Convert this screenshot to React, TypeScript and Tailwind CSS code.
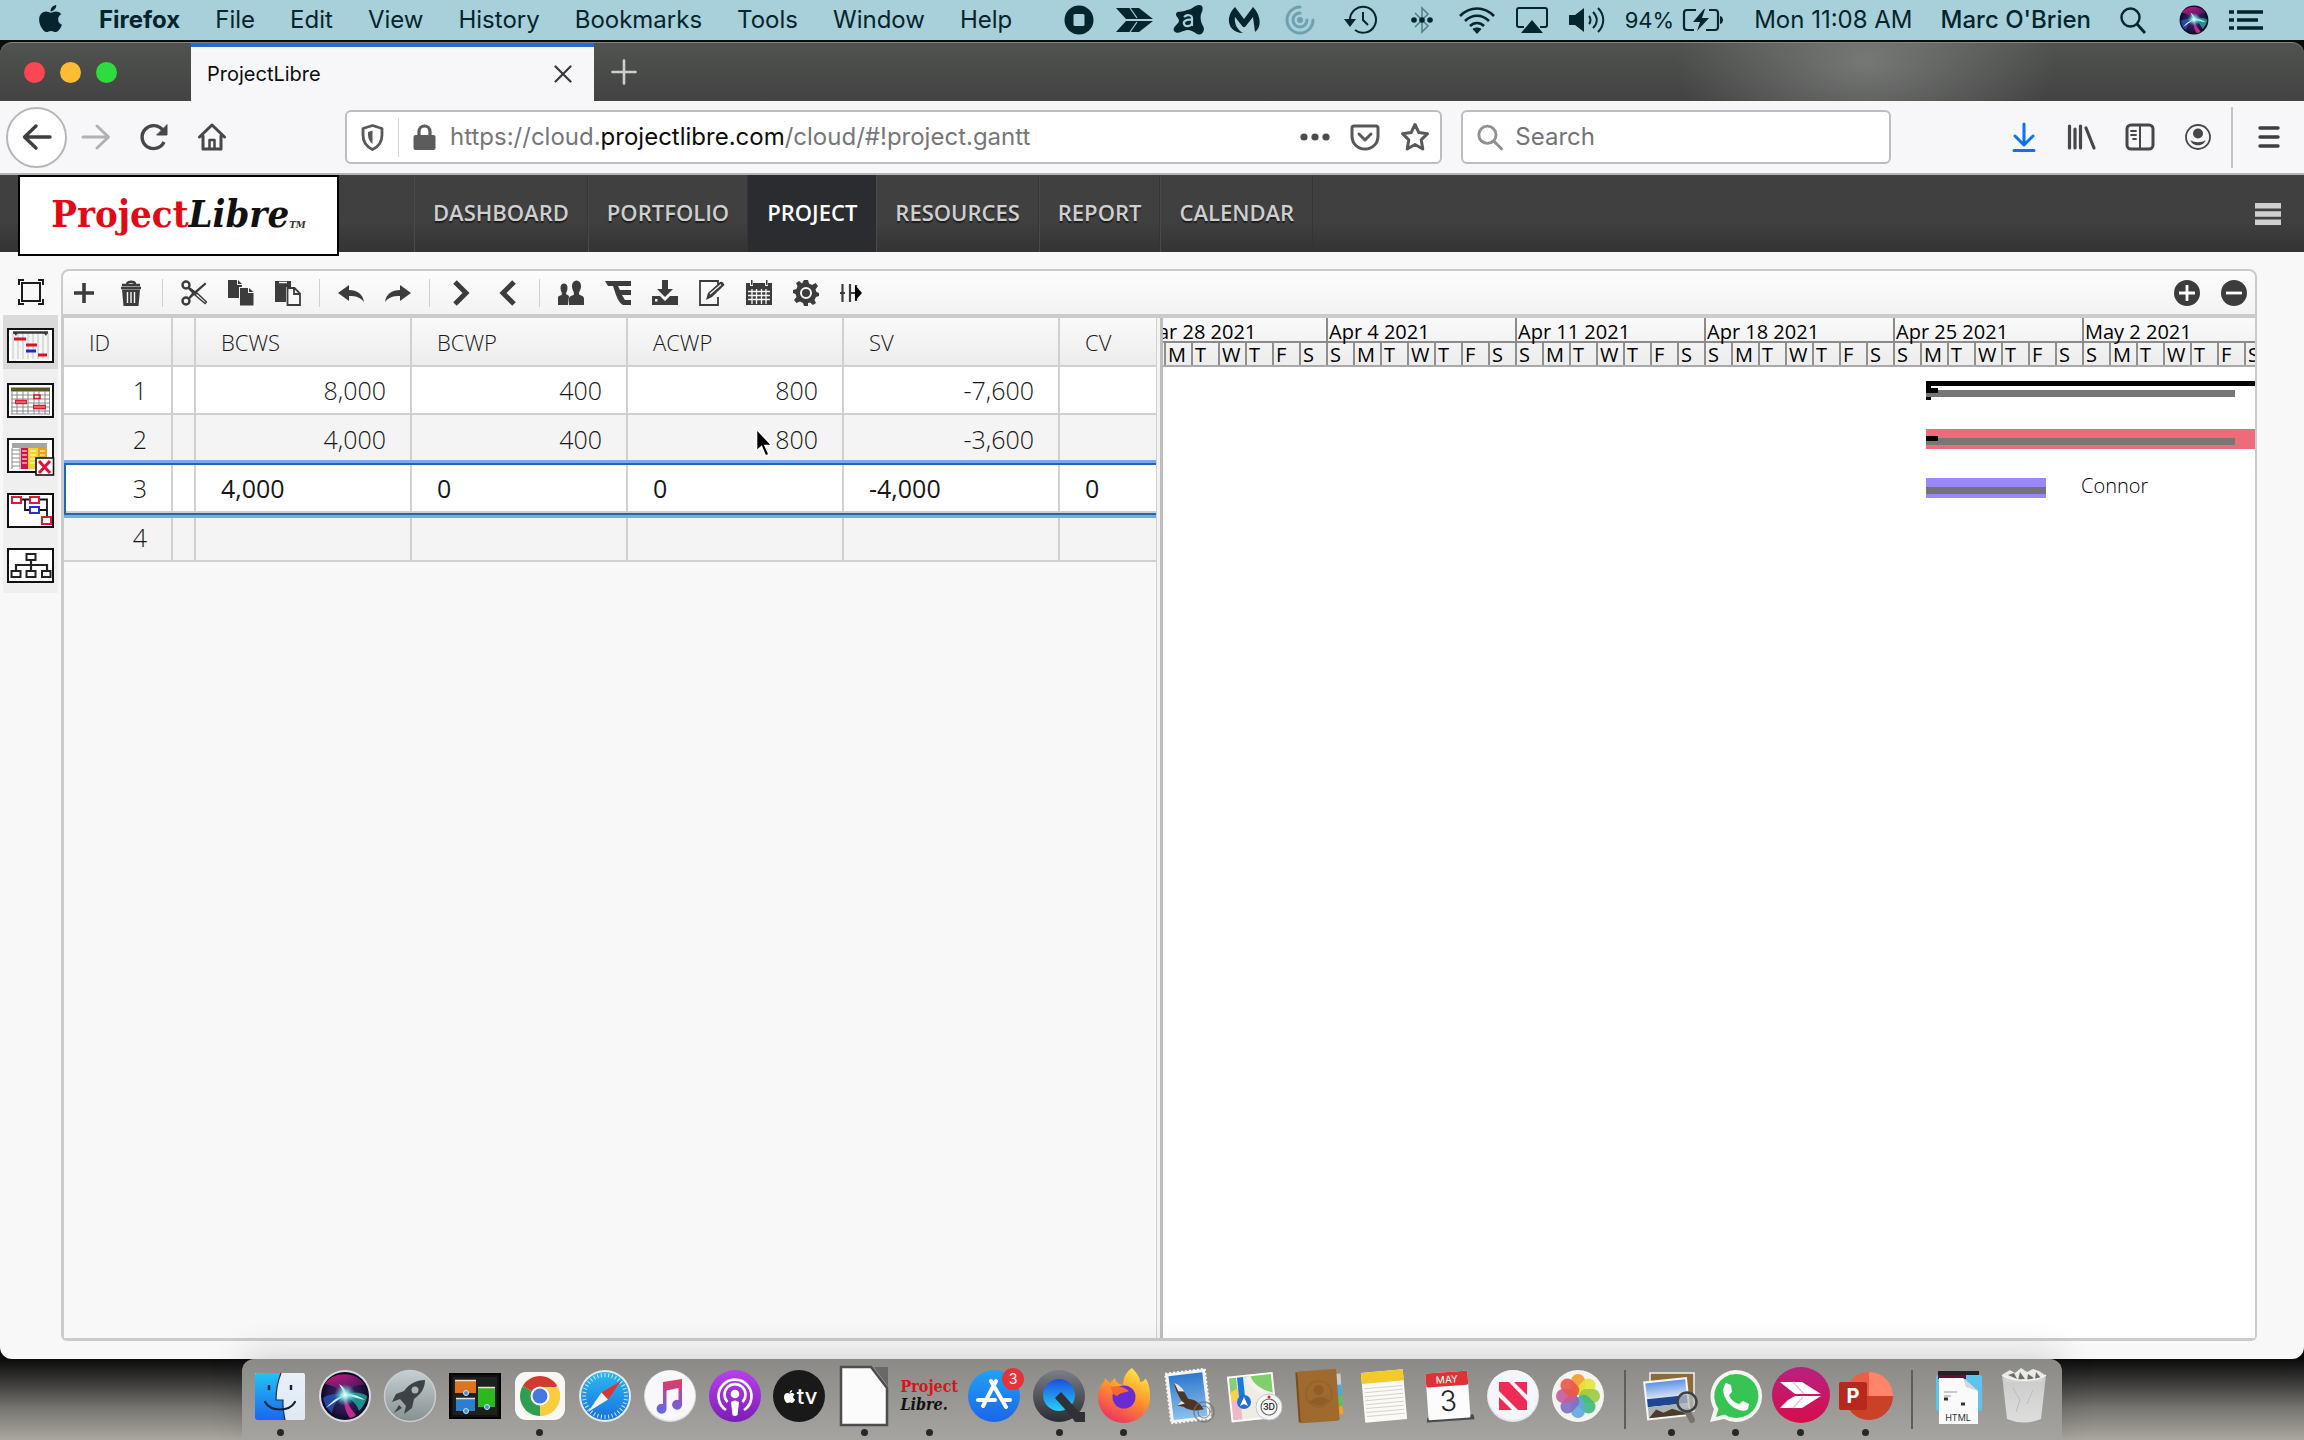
import React from "react";
import { FaApple } from "react-icons/fa";

type Kids = { children?: React.ReactNode };

/* ---------- Menu bar ---------- */

const menus = ["File", "Edit", "View", "History", "Bookmarks", "Tools", "Window", "Help"];

function Glyph({ w = 32, h = 30, label, children }: Kids & { w?: number; h?: number; label?: string }) {
  return (
    <svg width={w} height={h} viewBox={`0 0 ${w} ${h}`} fill="none" role="img" aria-label={label}>
      {children}
    </svg>
  );
}

function SiriArt({ id }: { id: string }) {
  return (
    <>
      <defs>
        <radialGradient id={`${id}a`} cx="0.5" cy="0.5" r="0.5">
          <stop offset="0" stopColor="#3a2a68" />
          <stop offset="0.7" stopColor="#241648" />
          <stop offset="1" stopColor="#0b0a1e" />
        </radialGradient>
        <radialGradient id={`${id}b`} cx="0.5" cy="0.5" r="0.5">
          <stop offset="0" stopColor="#ffffff" />
          <stop offset="0.3" stopColor="#9ff3f0" stopOpacity="0.9" />
          <stop offset="1" stopColor="#2dd8d0" stopOpacity="0" />
        </radialGradient>
        <linearGradient id={`${id}c`} x1="0" y1="0" x2="0.6" y2="1">
          <stop offset="0" stopColor="#e01a86" stopOpacity="0.95" />
          <stop offset="1" stopColor="#8a1a8a" stopOpacity="0.3" />
        </linearGradient>
      </defs>
      <circle cx="26" cy="26" r="24" fill={`url(#${id}a)`} />
      <path d="M6 14C14 1 38 1 46 15C38 14 31 18 26 25C19 18 12 15 6 14Z" fill={`url(#${id}c)`} />
      <path d="M26 25C33 21 42 22 48 26C47 33 43 38 40 41C38 34 32 29 26 25Z" fill="#1fb8a8" opacity="0.75" />
      <path d="M26 25C18 23 9 24 4 28C6 36 9 40 13 43C14 35 19 29 26 25Z" fill="#2a62d8" opacity="0.65" />
      <path d="M26 25C24 32 26 42 31 48C35 47 36 46 37 45C31 38 28 32 26 25Z" fill="#e42aa0" opacity="0.85" />
      <path d="M26 25L7 38C14 30 19 27 26 25Z M26 25L46 30C38 25 33 23 26 25Z M26 25L20 14C25 17 27 20 26 25Z" fill="#d6fffb" />
      <circle cx="26" cy="25" r="11" fill={`url(#${id}b)`} />
    </>
  );
}

function StatusCell({ wide = false, children }: Kids & { wide?: boolean }) {
  return <span className={`flex justify-center ${wide ? "w-[68px]" : "w-[55px]"}`}>{children}</span>;
}

function MenuBar() {
  const c = "#04252d";
  return (
    <header className="flex h-10 items-center bg-[#a7d0da] pl-9 pr-[41px] text-[24px] leading-none text-[#04252d]">
      <FaApple className="-mt-1 h-[31px] w-[29px]" aria-label="Apple menu" />
      <nav className="ml-[34px] flex items-center gap-[35px]">
        <span className="font-bold">Firefox</span>
        {menus.map((m) => (
          <span key={m}>{m}</span>
        ))}
      </nav>
      <div className="ml-auto flex items-center">
        <StatusCell>
          <Glyph label="Recording">
            <circle cx="16" cy="15" r="14.5" fill={c} />
            <rect x="10.5" y="9" width="11" height="12" rx="1.5" fill="#a7d0da" />
          </Glyph>
        </StatusCell>
        <StatusCell>
          <Glyph w={38} label="Skitch">
            <path d="M1 3H24L38 14H11Z M11 16H38L24 27H1Z" fill={c} />
            <path d="M15 3L22 13M15 27L22 17" stroke="#a7d0da" strokeWidth="1.2" />
          </Glyph>
        </StatusCell>
        <StatusCell>
          <Glyph label="Avast">
            <path
              d="M14 5C18 5 22 0 26 0C31 0 30 5 28 9C27 14 28 17 30 21C33 26 28 31 24 29C21 27 18 25 14 25C9 26 4 30 1 26C-1 22 5 20 6 16C6 13 3 12 3 9C4 5 9 8 14 5Z"
              fill={c}
            />
            <path d="M11 12C14 9 19 10 19 13V21M19 15C14 14 10 16 11 19C12 22 18 22 19 18" stroke="#a7d0da" strokeWidth="2.2" />
          </Glyph>
        </StatusCell>
        <StatusCell>
          <Glyph label="Malwarebytes">
            <path d="M7 2L16 14L25 2C33 10 34 22 27 27L25 12L17 22H15L7 12C6 18 9 25 15 28C4 28 0 20 1 13C2 8 4 5 7 2Z" fill={c} />
          </Glyph>
        </StatusCell>
        <StatusCell>
          <Glyph label="Sync idle">
            <g stroke="#6fa0ad" strokeWidth="3" strokeLinecap="round">
              <path d="M17 2A13 13 0 1 0 30 15" />
              <path d="M17 8A7 7 0 1 0 24 15" />
            </g>
            <circle cx="17" cy="15" r="3" fill="#6fa0ad" />
          </Glyph>
        </StatusCell>
        <StatusCell wide>
          <Glyph w={34} label="Time Machine">
            <path d="M6 15A13 13 0 1 1 11 25" stroke={c} strokeWidth="2" />
            <path d="M0 14H12L6 22Z" fill={c} />
            <path d="M19 7V15L24 20" stroke={c} strokeWidth="2" />
          </Glyph>
        </StatusCell>
        <StatusCell>
          <Glyph w={22} label="Bluetooth">
            <path d="M4 8L17 21L11 27V3L17 9L4 22" stroke="#4d7d89" strokeWidth="1.5" />
            <circle cx="3" cy="15" r="2.8" fill={c} />
            <circle cx="11" cy="15" r="2.8" fill={c} />
            <circle cx="19" cy="15" r="2.8" fill={c} />
          </Glyph>
        </StatusCell>
        <StatusCell>
          <Glyph w={38} label="Wi-Fi">
            <path d="M2 11C12 1 26 1 36 11M7 16C14 9 24 9 31 16M12 21C16 17 22 17 26 21" stroke={c} strokeWidth="2.6" />
            <path d="M14.5 24C17 22 21 22 23.5 24L19 29Z" fill={c} />
          </Glyph>
        </StatusCell>
        <StatusCell>
          <Glyph w={34} label="AirPlay">
            <path d="M9 22H4A2 2 0 0 1 2 20V5A2 2 0 0 1 4 3H30A2 2 0 0 1 32 5V20A2 2 0 0 1 30 22H25" stroke={c} strokeWidth="2" />
            <path d="M17 15L28 28H6Z" fill={c} />
          </Glyph>
        </StatusCell>
        <StatusCell>
          <Glyph w={38} label="Volume">
            <path d="M1 10H7L16 3V27L7 20H1Z" fill={c} />
            <path d="M21 11C23 13 23 17 21 19M25 7C30 12 30 18 25 23M30 3C37 10 37 20 30 27" stroke={c} strokeWidth="2" />
          </Glyph>
        </StatusCell>
        <span className="ml-[10px] text-[22px]">94%</span>
        <span className="ml-2">
          <Glyph w={42} h={24} label="Battery charging">
            <path d="M14 2H5A3 3 0 0 0 2 5V19A3 3 0 0 0 5 22H12M27 2H33A3 3 0 0 1 36 5V19A3 3 0 0 1 33 22H24" stroke={c} strokeWidth="2.2" />
            <path d="M22 1L11 14H18L15 23L27 10H20L23 1Z" fill={c} />
            <path d="M38 8C42 9 42 15 38 16Z" fill={c} />
          </Glyph>
        </span>
        <span className="ml-[30px]">Mon 11:08 AM</span>
        <span className="ml-7 font-medium">Marc O'Brien</span>
        <span className="ml-7">
          <Glyph w={28} h={28} label="Spotlight">
            <circle cx="11.5" cy="11.5" r="9" stroke={c} strokeWidth="2.4" />
            <path d="M18 18L26 27" stroke={c} strokeWidth="2.8" />
          </Glyph>
        </span>
        <svg className="ml-8" width="30" height="30" viewBox="1 1 50 50" role="img" aria-label="Siri">
          <SiriArt id="ms" />
        </svg>
        <span className="ml-5">
          <Glyph w={34} h={20} label="Notification Center">
            <path d="M0 2H5M0 10H5M0 18H5M8 2H34M8 10H29M8 18H34" stroke={c} strokeWidth="3.4" />
          </Glyph>
        </span>
      </div>
    </header>
  );
}

/* ---------- Browser chrome ---------- */

function TabStrip() {
  return (
    <div
      className="flex h-[59px] rounded-t-xl border-t border-[#7d8585]"
      style={{
        backgroundImage:
          "radial-gradient(ellipse 190px 110px at 81% 20px, rgba(160,162,160,0.5), transparent), linear-gradient(#505350, #424342)",
      }}
    >
      <div className="flex w-[191px] items-center gap-[15px] pl-6">
        <span className="size-[21px] rounded-full bg-[#fc4652]" />
        <span className="size-[21px] rounded-full bg-[#fdbc31]" />
        <span className="size-[21px] rounded-full bg-[#2fdc3e]" />
      </div>
      <div className="flex w-[403px] items-center border-t-4 border-[#2b68d6] bg-[#f7f7fa] pl-4 pr-[22px]">
        <span className="text-[20px] text-[#0c0c0d]">ProjectLibre</span>
        <button className="ml-auto" aria-label="Close tab">
          <svg width="18" height="18" viewBox="0 0 18 18" stroke="#38383a" strokeWidth="2.2" strokeLinecap="round">
            <path d="M1.5 1.5L16.5 16.5M16.5 1.5L1.5 16.5" />
          </svg>
        </button>
      </div>
      <button className="px-[17px]" aria-label="New tab">
        <svg width="26" height="26" viewBox="0 0 26 26" stroke="#cfcfcf" strokeWidth="2.6" strokeLinecap="round">
          <path d="M13 1.5V24.5M1.5 13H24.5" />
        </svg>
      </button>
    </div>
  );
}

function ToolbarIcon({ label, color = "#47474a", children }: Kids & { label: string; color?: string }) {
  return (
    <button className="flex w-[58px] justify-center" aria-label={label}>
      <svg width="30" height="30" viewBox="0 0 30 30" fill="none" stroke={color} strokeWidth="3" strokeLinecap="round" strokeLinejoin="round">
        {children}
      </svg>
    </button>
  );
}

function AddressBar() {
  return (
    <div className="flex h-[74px] items-center border-b-2 border-[#b4b4b6] bg-[#f7f7fa]">
      <div className="flex w-[345px] items-center pl-[6px]">
        <button className="flex size-[61px] items-center justify-center rounded-full border-2 border-[#b6b6b9] bg-white" aria-label="Back">
          <svg width="30" height="30" viewBox="0 0 30 30" fill="none" stroke="#3e3e41" strokeWidth="3.4" strokeLinecap="round" strokeLinejoin="round">
            <path d="M28 15H3M14 4L2.5 15L14 26" />
          </svg>
        </button>
        <ToolbarIcon label="Forward" color="#b2b2b5">
          <path d="M2 15H27M16 4L27.5 15L16 26" />
        </ToolbarIcon>
        <ToolbarIcon label="Reload">
          <path d="M25 20A11.5 11.5 0 1 1 24 8.5" strokeWidth="3.4" strokeLinecap="butt" />
          <path d="M28 3V13H18Z" fill="#47474a" strokeWidth="1" />
        </ToolbarIcon>
        <ToolbarIcon label="Home">
          <path d="M2.5 15L15 3L27.5 15M6 14V27H24V14" />
          <path d="M12.5 26V18H17.5V26" strokeWidth="2.5" />
        </ToolbarIcon>
      </div>
      <div className="flex h-[54px] flex-1 items-center rounded-md border-2 border-[#bdbdc0] bg-white text-[24px]">
        <span className="flex w-[52px] justify-center border-r border-[#d5d5d7] py-[6px]">
          <svg width="23" height="27" viewBox="0 0 23 27" fill="none" stroke="#58585a" strokeWidth="2.8" strokeLinejoin="round">
            <path d="M11.5 1.5L21 4.5V11C21 18 17 23 11.5 25.5C6 23 2 18 2 11V4.5Z" />
            <path d="M11.5 6.5L7 8V11C7 15 9 18 11.5 20Z" fill="#58585a" stroke="none" />
          </svg>
        </span>
        <svg className="mx-[14px]" width="23" height="26" viewBox="0 0 23 26" aria-hidden="true">
          <path d="M6 12V7.5A5.5 5.5 0 0 1 17 7.5V12" fill="none" stroke="#5c5c5e" strokeWidth="3.2" />
          <rect x="0.5" y="11" width="22" height="15" rx="2" fill="#5c5c5e" />
        </svg>
        <p className="flex-1 whitespace-nowrap text-[#76767a]">
          https://cloud.<span className="text-[#0c0c0d]">projectlibre.com</span>/cloud/#!project.gantt
        </p>
        <div className="flex items-center gap-5 pr-[10px]">
          <button aria-label="Page actions">
            <svg width="30" height="8" viewBox="0 0 30 8" fill="#4b4b4d">
              <circle cx="4" cy="4" r="3.6" />
              <circle cx="15" cy="4" r="3.6" />
              <circle cx="26" cy="4" r="3.6" />
            </svg>
          </button>
          <button aria-label="Save to Pocket">
            <svg width="30" height="27" viewBox="0 0 30 27" fill="none" stroke="#58585a" strokeWidth="3" strokeLinecap="round" strokeLinejoin="round">
              <path d="M4 2H26Q28 2 28 4V12C28 20 22 25 15 25S2 20 2 12V4Q2 2 4 2Z" />
              <path d="M9 10L15 16L21 10" />
            </svg>
          </button>
          <button aria-label="Bookmark this page">
            <svg width="30" height="30" viewBox="0 0 30 30" fill="none" stroke="#58585a" strokeWidth="3" strokeLinejoin="round">
              <path d="M15 2.5L18.8 10.5L27.5 11.7L21.2 17.8L22.8 27L15 22.5L7.2 27L8.8 17.8L2.5 11.7L11.2 10.5Z" />
            </svg>
          </button>
        </div>
      </div>
      <label className="ml-[19px] flex h-[54px] w-[430px] items-center gap-3 rounded-md border-2 border-[#bdbdc0] bg-white pl-[14px] text-[24px]">
        <svg width="29" height="29" viewBox="0 0 29 29" fill="none" stroke="#8f8f92" strokeWidth="3.2" strokeLinecap="round" aria-hidden="true">
          <circle cx="11.5" cy="11.5" r="9.5" />
          <path d="M18.5 18.5L27 27" />
        </svg>
        <input className="w-full min-w-0 bg-transparent outline-none placeholder:text-[#737377]" placeholder="Search" aria-label="Search" />
      </label>
      <div className="ml-[104px] flex items-center">
        <ToolbarIcon label="Downloads" color="#0a74f0">
          <path d="M15 2V22M6 14L15 23L24 14M5 28.5H25" />
        </ToolbarIcon>
        <ToolbarIcon label="Library">
          <path d="M2.5 4V26M8 7V26M13.5 4V26M19 6L27 26" strokeWidth="3.2" />
        </ToolbarIcon>
        <ToolbarIcon label="Sidebars">
          <rect x="2" y="3" width="26" height="24" rx="4" />
          <path d="M15 4V26" strokeWidth="2" />
          <path d="M6 9H11M6 13H11M8 17H11" strokeWidth="1.8" />
        </ToolbarIcon>
        <ToolbarIcon label="Account">
          <circle cx="15" cy="15" r="12" strokeWidth="1.8" />
          <circle cx="15" cy="11.5" r="5" fill="#47474a" stroke="none" />
          <path d="M7.5 18C11 21 19 21 22.5 18C21 25 9 25 7.5 18Z" fill="#47474a" stroke="none" />
        </ToolbarIcon>
      </div>
      <div className="ml-1 flex h-[61px] w-[73px] items-center justify-center border-l-2 border-[#c4c4c6]">
        <button aria-label="Open menu">
          <svg width="22" height="22" viewBox="0 0 22 22" stroke="#3e3e41" strokeWidth="3.4" strokeLinecap="round">
            <path d="M2 2H20M2 11H20M2 20H20" />
          </svg>
        </button>
      </div>
    </div>
  );
}

/* ---------- ProjectLibre header ---------- */

const sections = ["DASHBOARD", "PORTFOLIO", "PROJECT", "RESOURCES", "REPORT", "CALENDAR"];

function SiteHeader() {
  return (
    <div className="relative z-10 flex h-[77px] items-stretch bg-linear-to-b from-[#404041] from-60% to-[#333333] font-['Open_Sans',sans-serif]">
      <a
        href="#dashboard"
        className="ml-[18px] flex h-[81px] w-[321px] items-center justify-center whitespace-nowrap border-2 border-black bg-white pb-1 font-['DejaVu_Serif_Condensed','DejaVu_Serif',serif] text-[38px] font-bold leading-none"
      >
        <span className="text-[#e10a17]">Project</span>
        <span className="italic text-[#111111]">Libre</span>
        <span className="self-end pb-5 text-[10px] italic text-[#333333]">TM</span>
      </a>
      <nav className="ml-[75px] flex">
        {sections.map((s) => (
          <a
            key={s}
            href={`#${s.toLowerCase()}`}
            className={
              s === "PROJECT"
                ? "flex items-center bg-[#2a2c2f] px-[19px] pb-[2px] text-[22px] font-semibold text-white"
                : "flex items-center border-r border-[#343435] border-l border-l-[#4a4a4b] px-[18px] pb-[2px] text-[22px] font-semibold text-[#cfcfcf] [text-shadow:0_2px_1px_#1d1d1d]"
            }
          >
            {s}
          </a>
        ))}
      </nav>
      <button className="ml-auto mr-[23px]" aria-label="Menu">
        <svg width="26" height="22" viewBox="0 0 26 22" fill="#cfcfcf">
          <path d="M0 0H26V5.5H0ZM0 8.3H26V13.8H0ZM0 16.5H26V22H0Z" />
        </svg>
      </button>
    </div>
  );
}

/* ---------- Application toolbar ---------- */

const k = "#3c3c3c";
const toolGroups: { name: string; art: React.ReactNode }[][] = [
  [
    { name: "Insert task", art: <path d="M13 3V23M3 13H23" stroke={k} strokeWidth="3.6" /> },
    {
      name: "Delete task",
      art: (
        <>
          <path d="M9 4C9 1 17 1 17 4M4 5H22M3 8H23" stroke={k} strokeWidth="2.4" />
          <path d="M4 9.5H22L20.5 26H5.5Z" fill={k} />
          <path d="M9.5 12V23M13 12V23M16.5 12V23" stroke="#f8f8f8" strokeWidth="1.4" />
        </>
      ),
    },
  ],
  [
    {
      name: "Cut",
      art: (
        <>
          <circle cx="5" cy="5" r="3.5" stroke={k} strokeWidth="2.4" />
          <circle cx="5" cy="21" r="3.5" stroke={k} strokeWidth="2.4" />
          <path d="M8 6.5L14 11L24 2.5L25.5 4L11 17L8 20L7 18L11 13L7 9Z" fill={k} />
          <path d="M14 15L16 13L25.5 22L24 23.5Z" fill="#f8f8f8" stroke={k} strokeWidth="1.5" />
        </>
      ),
    },
    {
      name: "Copy",
      art: (
        <>
          <path d="M0 0H9V5H14V7H11V18H0Z M10 0L14 4H10Z" fill={k} />
          <path d="M12 8H20V13H25.5V25.5H12Z M21 8L25.5 12H21Z" fill={k} />
        </>
      ),
    },
    {
      name: "Paste",
      art: (
        <>
          <path d="M0 1H16V7H11V22H0Z" fill={k} />
          <path d="M4 2.5H12" stroke="#f8f8f8" strokeWidth="1.5" />
          <path d="M12.5 8H19.5L25 13.5V25H12.5ZM19 8V14H25" fill="#f8f8f8" stroke={k} strokeWidth="1.8" />
        </>
      ),
    },
  ],
  [
    { name: "Undo", art: <path d="M0 13L11 5V10C19 10 25 14 26 22C22 17 18 16 11 16V21Z" fill={k} /> },
    { name: "Redo", art: <path d="M26 13L15 5V10C7 10 1 14 0 22C4 17 8 16 15 16V21Z" fill={k} /> },
  ],
  [
    { name: "Indent", art: <path d="M7 2L18 13L7 24" stroke={k} strokeWidth="5" /> },
    { name: "Outdent", art: <path d="M19 2L8 13L19 24" stroke={k} strokeWidth="5" /> },
  ],
  [
    {
      name: "Assign resources",
      art: (
        <>
          <path d="M2.5 8A3.5 4.5 0 0 1 9.5 8C9.5 11 8 12 8 14L11 16L10 25H0V17C1 15 4 16 4 14C4 12 2.5 11 2.5 8Z" fill={k} />
          <path d="M14 6A4.5 5.5 0 0 1 23 6C23 10 21 11 21 14C22 16 26 15 26 19V25H11V19C11 15 16 16 16 14C16 11 14 10 14 6Z" fill={k} />
        </>
      ),
    },
    { name: "Outline", art: <path d="M0 1H26V6H13L15 10H26V15H17L20 20H26V25H18Q14 23 11 15L8 6H3Z" fill={k} /> },
    {
      name: "Baseline",
      art: (
        <>
          <path d="M10 0H16V9H21L13 17L5 9H10Z" fill={k} />
          <path d="M0 16H8L13 21L18 16H26V25H0Z" fill={k} />
          <rect x="3" y="19" width="2.5" height="2.5" fill="#f8f8f8" />
        </>
      ),
    },
    {
      name: "Edit",
      art: (
        <>
          <path d="M19 5V1H1V25H19V17" stroke={k} strokeWidth="1.8" />
          <path d="M7 20L9 13L21 2Q24 1 25.5 5L13 17Z" fill={k} />
          <path d="M11 14L22 4.5" stroke="#f8f8f8" strokeWidth="1.2" />
        </>
      ),
    },
    {
      name: "Calendar",
      art: (
        <>
          <path d="M0 3H4V6H7V3H19V6H22V3H26V25H0Z M5 0H6.5V5H5Z M20 0H21.5V5H20Z" fill={k} />
          <path d="M2 11.5H24M2 15.5H24M2 19.5H24M6 9V24M10.5 9V24M15.5 9V24M20 9V24" stroke="#f8f8f8" strokeWidth="1.3" />
        </>
      ),
    },
    {
      name: "Settings",
      art: (
        <>
          <path
            d="M11 0H15L16 3.5L19 5L22.5 3L25 6L22.5 9.5L23.5 12L26 13V16L23 17L21.5 20L23 23L20 25L17 22.5L15 23V26H11L10 23L7 21.5L3.5 23L1 20L3.5 17L2.5 14L0 13V10L3.5 9L4.5 6L3 3L6 1L9 3.5Z"
            fill={k}
          />
          <circle cx="13" cy="13" r="5" fill="none" stroke="#f8f8f8" strokeWidth="2" />
        </>
      ),
    },
    {
      name: "Fit columns",
      art: (
        <>
          <path d="M2.5 4V22M0 13H5M10 4V22M10 13H15M16 5V21" stroke={k} strokeWidth="2.2" />
          <path d="M15 5L22 13L15 21Z" fill="#000" />
        </>
      ),
    },
  ],
];

function AppToolbar() {
  return (
    <div className="flex h-[49px] items-center rounded-t-lg border-2 border-b-4 border-[#cbcbcb] bg-linear-to-b from-[#fcfcfc] to-[#f3f3f3] pr-2">
      <div className="-ml-[3px] flex">
        {toolGroups.map((group, i) => (
          <div key={i} className="flex items-center">
            {i > 0 && (
              <span className="flex w-4 justify-center">
                <span className="h-7 w-px bg-[#d0d0d0]" />
              </span>
            )}
            {group.map((t) => (
              <button key={t.name} aria-label={t.name} className="flex w-[47px] justify-center">
                <svg width="26" height="26" viewBox="0 0 26 26" fill="none">
                  {t.art}
                </svg>
              </button>
            ))}
          </div>
        ))}
      </div>
      <div className="ml-auto flex gap-[21px]">
        <button aria-label="Zoom in">
          <svg width="26" height="26" viewBox="0 0 26 26">
            <circle cx="13" cy="13" r="13" fill={k} />
            <path d="M13 5V21M5 13H21" stroke="#fff" strokeWidth="2.8" />
          </svg>
        </button>
        <button aria-label="Zoom out">
          <svg width="26" height="26" viewBox="0 0 26 26">
            <circle cx="13" cy="13" r="13" fill={k} />
            <path d="M5 13H21" stroke="#fff" strokeWidth="2.8" />
          </svg>
        </button>
      </div>
    </div>
  );
}

/* ---------- View switcher ---------- */

const views: { name: string; art: React.ReactNode }[] = [
  {
    name: "Gantt",
    art: (
      <>
        <rect x="4" y="3" width="39" height="29" fill="#f6f6f6" />
        <path d="M6 5V31M11 5V31M16 5V31M21 5V31M26 5V31M31 5V31M36 5V31M41 5V31" stroke="#c4c4c4" />
        <path d="M6 4.5H41" stroke="#3a3a3a" strokeWidth="2.5" />
        <path d="M6 4L9 8L11 4ZM36 4L39 8L41 4Z" fill="#3a3a3a" />
        <path d="M7 11H19M19 17H30M31 27H40" stroke="#d31127" strokeWidth="3" />
        <path d="M19 23H29" stroke="#2222dd" strokeWidth="3" />
      </>
    ),
  },
  {
    name: "Tracking Gantt",
    art: (
      <>
        <rect x="4" y="4" width="39" height="27" fill="#fff" />
        <path d="M4 6.5H43" stroke="#59591f" strokeWidth="4" />
        <path
          d="M4 12H43M4 16H43M4 20H43M4 24H43M4 28H43M4 31H43M5 8V31M10 8V31M16 8V31M21 8V31M27 8V31M32 8V31M38 8V31M42.5 8V31"
          stroke="#8a8a8a"
        />
        <path d="M8 19H20M26 24H39" stroke="#dd1838" strokeWidth="4.5" />
        <path d="M9 19H19M27 24H38" stroke="#f3a3ae" strokeWidth="1.2" />
        <rect x="27" y="12" width="6" height="3.5" stroke="#dd1838" strokeWidth="1.5" fill="none" />
      </>
    ),
  },
  {
    name: "Task usage",
    art: (
      <>
        <path d="M5 5H40V10H5Z" fill="#a5a5a5" />
        <path d="M14 10H21V31H14Z" fill="#d11547" />
        <path d="M21 10H31V31H21Z" fill="#f3d431" />
        <path d="M31 10H40V31H31Z" fill="#e6a41b" />
        <path d="M5 12H13M5 16H13M5 20H13M5 24H13M5 28H13M5 10V31M13 10V31" stroke="#8a8a8a" />
        <path
          d="M15 13H20M15 17H20M15 21H20M15 25H20M23 13H29M23 17H29M23 21H29M23 25H29M33 13H38M33 17H38"
          stroke="#fff"
          strokeWidth="1.2"
        />
        <rect x="29" y="20" width="17.5" height="17" fill="#fff" stroke="#111" strokeWidth="1.6" />
        <path d="M32 23L43 35M43 23L32 35" stroke="#e0123c" strokeWidth="3" />
      </>
    ),
  },
  {
    name: "Network",
    art: (
      <>
        <path d="M14 6.5H22M32 6.5H40V23M18 6.5V17H22M32 17H40" stroke="#111" strokeWidth="1.8" fill="none" />
        <path d="M5 4H14V10H5ZM23 4H32V10H23ZM35 24H44V31H35Z" fill="#fff" stroke="#dd1838" strokeWidth="2" />
        <path d="M23 14H32V20H23Z" fill="#fff" stroke="#2a2add" strokeWidth="2" />
      </>
    ),
  },
  {
    name: "Work breakdown",
    art: (
      <>
        <path d="M24 12V22M9 23V17H40V23" stroke="#222" strokeWidth="2.2" fill="none" />
        <path
          d="M19.5 6H28.5V12H19.5ZM4.5 23H13.5V29H4.5ZM19.5 23H28.5V29H19.5ZM35 23H43.5V29H35Z"
          fill="#fff"
          stroke="#222"
          strokeWidth="2"
        />
      </>
    ),
  },
];

function ViewSwitcher() {
  return (
    <aside className="flex w-[61px] flex-col items-center">
      <button className="flex h-[46px] items-center" aria-label="Full screen">
        <svg width="26" height="26" viewBox="0 0 26 26" fill="none" stroke="#1c1c1c">
          <rect x="4" y="4" width="18" height="18" strokeWidth="2" />
          <path d="M1 6V1H6M20 1H25V6M25 20V25H20M6 25H1V20" strokeWidth="2" />
        </svg>
      </button>
      <div className="flex w-[55px] flex-col gap-[1px] bg-[#efefef] pb-1">
        {views.map((v, i) => (
          <button
            key={v.name}
            aria-label={v.name}
            className={i === 0 ? "flex h-[54px] items-end justify-center bg-[#dadada] pb-[6px]" : "flex h-[54px] items-end justify-center pb-[6px]"}
          >
            <svg className="overflow-visible" width="47" height="35" viewBox="0 0 47 35">
              <rect x="1" y="1" width="45" height="33" fill="#fff" stroke="#111" strokeWidth="2" />
              {v.art}
            </svg>
          </button>
        ))}
      </div>
    </aside>
  );
}

/* ---------- Task table ---------- */

const columns = ["BCWS", "BCWP", "ACWP", "SV", "CV"];
const rows: string[][] = [
  ["8,000", "400", "800", "-7,600", ""],
  ["4,000", "400", "800", "-3,600", ""],
  ["4,000", "0", "0", "-4,000", "0"],
  ["", "", "", "", ""],
];

function Cursor() {
  return (
    <svg className="absolute left-[127px] top-[12px] z-20" width="20" height="32" viewBox="0 0 20 32" aria-hidden="true">
      <path d="M1.5 2V24L6.5 19.5L10.5 29L14 27.5L10 18.5H17Z" fill="#000" stroke="#fff" strokeWidth="1.6" />
    </svg>
  );
}

function TaskTable() {
  const edge = "border-r-2 border-b-2 border-[#d0d0d0]";
  return (
    <div className="min-w-0 flex-1 overflow-hidden bg-[#f8f8f8]">
      <table className="w-[1212px] table-fixed border-separate border-spacing-0 text-[25px] leading-[32px] text-[#161616]">
        <colgroup>
          <col className="w-[109px]" />
          <col className="w-[23px]" />
          {columns.map((c) => (
            <col key={c} className="w-[216px]" />
          ))}
        </colgroup>
        <thead>
          <tr className="h-[49px] bg-linear-to-b from-[#fafafa] to-[#ececec] text-left text-[22px]">
            <th className={`${edge} pl-[25px] font-light`}>ID</th>
            <th className={edge} aria-label="Indicators" />
            {columns.map((c) => (
              <th key={c} className={`${edge} pl-[25px] font-light`}>
                {c}
              </th>
            ))}
          </tr>
        </thead>
        <tbody>
          {rows.map((cells, r) => {
            const editing = r === 2;
            return (
              <tr
                key={r}
                className={editing ? "relative h-[49px] bg-white" : r === 0 ? "h-[48px] bg-white" : "h-[49px] bg-[#f4f4f4]"}
              >
                <td className={`${edge} pr-6 text-right font-light`}>
                  {r + 1}
                  {editing && (
                    <span className="pointer-events-none absolute -top-px left-0 h-[52px] w-[1094px] border-2 border-[#1f66b4] shadow-[0_-3px_0_#78ace8,0_3px_0_#78ace8]" />
                  )}
                </td>
                <td className={edge} />
                {cells.map((value, c) =>
                  editing ? (
                    <td key={c} className={`${edge} px-[25px]`}>
                      <input className="block w-full bg-transparent outline-none" defaultValue={value} aria-label={`${columns[c]} of task 3`} />
                    </td>
                  ) : (
                    <td key={c} className={`${edge} ${r === 1 && c === 2 ? "relative" : ""} pr-6 text-right font-light`}>
                      {value}
                      {r === 1 && c === 2 && <Cursor />}
                    </td>
                  ),
                )}
              </tr>
            );
          })}
        </tbody>
      </table>
    </div>
  );
}

/* ---------- Gantt chart ---------- */

const weeks = ["Mar 28 2021", "Apr 4 2021", "Apr 11 2021", "Apr 18 2021", "Apr 25 2021", "May 2 2021"];
const days = ["S", "M", "T", "W", "T", "F", "S"];

function Gantt() {
  return (
    <div className="flex min-w-0 flex-1 flex-col overflow-hidden border-l-[3px] border-[#bdbdbd] bg-white">
      <div className="-ml-[26px] flex h-[49px] bg-linear-to-b from-[#fafafa] to-[#ececec] text-[20px] leading-[24px] text-black">
        {weeks.map((w) => (
          <div key={w} className="w-[189px] shrink-0">
            <p className="h-[25px] whitespace-nowrap border-b-2 border-l-2 border-[#8b8b8b] pl-px pt-[2px]">{w}</p>
            <div className="flex border-b-2 border-[#a9a9a9]">
              {days.map((d, i) => (
                <span key={i} className="h-[22px] w-[27px] border-l-2 border-[#8f8f8f] pl-[2px]">
                  {d}
                </span>
              ))}
            </div>
          </div>
        ))}
      </div>
      <div className="relative flex-1">
        <div className="absolute left-[763px] right-0 top-[14px] h-[5px] bg-black" />
        <div className="absolute left-[763px] top-[14px] h-[19px] w-[5px] bg-black" />
        <div className="absolute left-[763px] top-[23px] h-[7px] w-[309px] bg-[#767676]" />
        <div className="absolute left-[763px] top-[21px] h-[5px] w-[12px] bg-black" />

        <div className="absolute left-[763px] right-0 top-[62px] h-5 bg-[#ef6b7b]" />
        <div className="absolute left-[763px] top-[71px] h-[7px] w-[309px] bg-[#7b7573]" />
        <div className="absolute left-[763px] top-[69px] h-[5px] w-[12px] bg-black" />

        <div className="absolute left-[763px] top-[111px] h-5 w-[120px] bg-[#9a87fa]" />
        <div className="absolute left-[763px] top-[120px] h-[7px] w-[120px] bg-[#757378]" />
        <span className="absolute left-[918px] top-[107px] text-[20px] font-light leading-6 text-black">Connor</span>
      </div>
    </div>
  );
}

/* ---------- Dock ---------- */

function Art({ children }: Kids) {
  return (
    <svg className="overflow-visible" width="52" height="52" viewBox="0 0 52 52" fill="none" aria-hidden="true">
      {children}
    </svg>
  );
}

function Grad({ id, a, b }: { id: string; a: string; b: string }) {
  return (
    <linearGradient id={id} x1="0" y1="0" x2="0" y2="1">
      <stop offset="0" stopColor={a} />
      <stop offset="1" stopColor={b} />
    </linearGradient>
  );
}

const petals = ["#f49a2c", "#e4e43a", "#9ccb3c", "#3fb97a", "#5fa9dd", "#7d6fc0", "#c45b9c", "#ea5648"];
const ticks = Array.from({ length: 36 }, (_, i) => i * 10);

type DockApp = { name: string; open?: boolean; art: React.ReactNode };

const apps: DockApp[] = [
  {
    name: "Finder",
    open: true,
    art: (
      <Art>
        <Grad id="fd1" a="#22c3f5" b="#1b66ee" />
        <Grad id="fd2" a="#e9f0f8" b="#dfe8f4" />
        <rect x="1" y="3" width="50" height="47" rx="2" fill="url(#fd2)" />
        <path d="M3 3H27C23 13 22 22 22 30H29C28.5 38 30 45 31 50H3Q1 50 1 48V5Q1 3 3 3Z" fill="url(#fd1)" />
        <path d="M27 3C23 13 22 22 22 30H29C28.5 38 30 45 31 50" stroke="#17324e" strokeWidth="1.2" />
        <path d="M15 15V20M37 15V20" stroke="#0d2035" strokeWidth="2.4" />
        <path d="M11 32C17 42 35 42 41 32" stroke="#0d2035" strokeWidth="2.2" strokeLinecap="round" />
      </Art>
    ),
  },
  {
    name: "Siri",
    art: (
      <Art>
        <circle cx="26" cy="26" r="26" fill="#dcdce2" />
        <SiriArt id="ds" />
      </Art>
    ),
  },
  {
    name: "Launchpad",
    art: (
      <Art>
        <Grad id="lp" a="#c6cfd3" b="#86908f" />
        <circle cx="26" cy="26" r="25.5" fill="url(#lp)" stroke="#c9cdcf" strokeWidth="1.5" />
        <path d="M41 10C32 10 25 14 20 21L12 24L8 32L16 29L22 36L20 44L28 38L30 29C37 24 41 18 41 10Z" fill="#3c4245" />
        <path d="M15 35L10 43L18 38Z" fill="#3c4245" />
        <circle cx="31" cy="20" r="3.5" fill="#aab2b4" />
      </Art>
    ),
  },
  {
    name: "Mission Control",
    art: (
      <Art>
        <rect x="1" y="4" width="50" height="44" fill="#111" stroke="#050505" strokeWidth="2" />
        <rect x="4" y="7" width="44" height="38" fill="#1d211d" />
        <rect x="6" y="10" width="21" height="13" fill="#dd7420" />
        <rect x="29" y="17" width="17" height="20" fill="#2cb81f" />
        <rect x="7" y="28" width="19" height="13" fill="#2d7ed0" />
        <path d="M6 10.5H27M29 17.5H46M7 28.5H26" stroke="#e9e2d8" strokeWidth="1.5" />
        <circle cx="17" cy="23" r="2.5" fill="#4a90e2" stroke="#cfe3ff" />
        <circle cx="38" cy="37" r="2.5" fill="#4a90e2" stroke="#cfe3ff" />
        <circle cx="17" cy="41" r="2.5" fill="#4a90e2" stroke="#cfe3ff" />
      </Art>
    ),
  },
  {
    name: "Chrome",
    open: true,
    art: (
      <Art>
        <rect x="1" y="2" width="50" height="48" rx="11" fill="#f8f7f4" />
        <path d="M26 26L8.7 16A20 20 0 0 1 43.3 16Z" fill="#d13a31" />
        <path d="M26 26L43.3 16A20 20 0 0 1 26 46Z" fill="#f8cc3a" />
        <path d="M26 26L26 46A20 20 0 0 1 8.7 16Z" fill="#2f9e50" />
        <path d="M26 17H43.8A20 20 0 0 1 26 46L34 30Z" fill="#f8cc3a" />
        <circle cx="26" cy="26" r="9.5" fill="#fff" />
        <circle cx="26" cy="26" r="7.5" fill="#4579e0" />
      </Art>
    ),
  },
  {
    name: "Safari",
    art: (
      <Art>
        <Grad id="sf" a="#2bb8f2" b="#1873dc" />
        <circle cx="26" cy="26" r="26" fill="#e9edf1" />
        <circle cx="26" cy="26" r="24" fill="url(#sf)" />
        {ticks.map((t) => (
          <path key={t} d="M26 3V7" stroke="#cfe9fa" strokeWidth="1" transform={`rotate(${t} 26 26)`} />
        ))}
        <path d="M42 11L22.5 22.5L29 29.5Z" fill="#e0332f" />
        <path d="M9 42L22.5 22.5L29 29.5Z" fill="#f3f0ee" />
      </Art>
    ),
  },
  {
    name: "Music",
    art: (
      <Art>
        <Grad id="mu" a="#e8365e" b="#5a6af0" />
        <circle cx="26" cy="26" r="26" fill="#dededf" />
        <circle cx="26" cy="25.5" r="25" fill="#f8f8fa" />
        <path d="M19 12L38 9V34A5 5 0 1 1 34.5 30V18L22.5 20.5V38A5 5 0 1 1 19 34Z" fill="url(#mu)" />
      </Art>
    ),
  },
  {
    name: "Podcasts",
    art: (
      <Art>
        <Grad id="pc" a="#b840ec" b="#7c1cb8" />
        <circle cx="26" cy="26" r="26" fill="url(#pc)" />
        <g stroke="#fff" strokeWidth="2.6" fill="none">
          <path d="M17 40A16.5 16.5 0 1 1 35 40" />
          <path d="M18.5 32A10.5 10.5 0 1 1 33.5 32" />
        </g>
        <circle cx="26" cy="24" r="4.3" fill="#fff" />
        <path d="M22 32Q26 29 30 32L28.5 45Q26 47 23.5 45Z" fill="#fff" />
      </Art>
    ),
  },
  {
    name: "TV",
    art: (
      <span className="flex size-[52px] items-center justify-center rounded-full bg-[#19191a] text-[22px] font-medium leading-none text-white">
        <FaApple className="size-[15px]" />
        tv
      </span>
    ),
  },
  {
    name: "LibreOffice",
    open: true,
    art: (
      <Art>
        <path d="M2 -3H50V16L36 -3" fill="#686868" />
        <path d="M3 -3H33L49 18V55H3Z" fill="#fbfbfb" stroke="#4d4d4d" strokeWidth="2.5" />
      </Art>
    ),
  },
  {
    name: "ProjectLibre",
    open: true,
    art: (
      <span className="flex flex-col text-left font-['DejaVu_Serif_Condensed','DejaVu_Serif',serif] text-[16px] font-bold leading-[18px]">
        <span className="text-[#d8141f]">Project</span>
        <span className="italic text-[#111111]">Libre.</span>
      </span>
    ),
  },
  {
    name: "App Store",
    art: (
      <span className="relative">
        <Art>
          <Grad id="as" a="#22a0f5" b="#1a66e8" />
          <circle cx="26" cy="26" r="26" fill="url(#as)" />
          <g stroke="#fff" strokeWidth="4" strokeLinecap="round">
            <path d="M28 11L15 36M23 11L38 37M10 30H27M35 30H42" />
          </g>
        </Art>
        <span className="absolute -right-1 -top-[2px] flex size-[22px] items-center justify-center rounded-full bg-[#e8323a] text-[14px] leading-none text-white">
          3
        </span>
      </span>
    ),
  },
  {
    name: "QuickTime Player",
    open: true,
    art: (
      <Art>
        <Grad id="qt" a="#7a7f86" b="#2a2c30" />
        <Grad id="qb" a="#1f4de0" b="#25d0f7" />
        <circle cx="26" cy="26" r="26" fill="url(#qt)" />
        <circle cx="26" cy="25" r="16" fill="url(#qb)" />
        <path d="M22 28L28 22L46 42H52V52H42L38 46Z" fill="#2f3136" />
      </Art>
    ),
  },
  {
    name: "Firefox",
    open: true,
    art: (
      <Art>
        <defs>
          <linearGradient id="ff" x1="0.8" y1="0" x2="0.3" y2="1">
            <stop offset="0" stopColor="#fff04a" />
            <stop offset="0.45" stopColor="#ff9a2a" />
            <stop offset="1" stopColor="#ef2f62" />
          </linearGradient>
        </defs>
        <path
          d="M34 -2C40 4 42 8 42 12C46 12 48 8 47 8C52 14 52 22 52 28A26 25 0 0 1 0 28C0 20 3 14 6 12L7 8L12 13L17 8C18 12 20 14 25 15C25 8 28 2 34 -2Z"
          fill="url(#ff)"
        />
        <circle cx="26" cy="27" r="11.5" fill="#6a2bd0" />
        <path d="M13 17C20 15 26 17 31 21C27 23 23 22 19 26C15 25 13 21 13 17Z" fill="#f6682d" />
      </Art>
    ),
  },
  {
    name: "Mail",
    art: (
      <Art>
        <Grad id="ml" a="#2f78cf" b="#8cc0ec" />
        <g transform="rotate(-7 26 26)">
          <rect x="5" y="1" width="40" height="50" fill="#f4f4f2" stroke="#f4f4f2" strokeWidth="2" strokeDasharray="2 2" />
          <rect x="8" y="4" width="34" height="44" fill="url(#ml)" />
          <path d="M13 11C19 15 22 21 25 29C31 30 36 34 39 41C32 42 25 41 19 36L13 34L18 30C15 23 13 17 13 11Z" fill="#4b3626" />
          <path d="M13 11C18 14 20 17 22 21L16 20Z M13 34L18 30L21 33Z" fill="#e9e4da" />
        </g>
        <circle cx="41" cy="42" r="10" stroke="#6f6f6f" strokeWidth="1.5" opacity="0.7" />
        <circle cx="41" cy="42" r="6" stroke="#555" opacity="0.7" />
      </Art>
    ),
  },
  {
    name: "Maps",
    art: (
      <Art>
        <g transform="rotate(-6 26 26)">
          <rect x="2" y="5" width="44" height="44" fill="#efece3" stroke="#fff" strokeWidth="2" />
          <path d="M18 6H45V28Z" fill="#7fd069" />
          <path d="M3 6H10V20L3 24Z" fill="#86cf74" />
          <path d="M3 28L12 24V48H3Z" fill="#f2b7c5" />
          <path d="M3 20L12 16V26L3 30Z" fill="#f4d24e" />
          <path d="M22 6C24 16 34 24 45 27" stroke="#f3f1ea" strokeWidth="5" />
          <path d="M14 6V30" stroke="#1b78e0" strokeWidth="6" />
        </g>
        <circle cx="16" cy="32" r="7" fill="#1c6fd6" />
        <path d="M16 27L20 36L16 34L12 36Z" fill="#fff" />
        <circle cx="41" cy="37" r="13" fill="#f6f6f6" stroke="#c8c8c8" />
        <circle cx="41" cy="37" r="8" stroke="#666" strokeWidth="1.2" />
        <text x="41" y="40" textAnchor="middle" fontSize="9" fontFamily="Inter, sans-serif" fontWeight="600" fill="#333">
          3D
        </text>
        <circle cx="41" cy="27" r="1.5" fill="#d22" />
      </Art>
    ),
  },
  {
    name: "Contacts",
    art: (
      <Art>
        <g transform="rotate(-4 26 26)">
          <path d="M42 5H49V18H42Z" fill="#c9ccd0" />
          <path d="M42 16H49V27H42Z" fill="#4ba9df" />
          <path d="M42 27H49V38H42Z" fill="#5cc25e" />
          <path d="M42 38H49V46H42Z" fill="#f0a02b" />
          <rect x="5" y="0" width="40" height="52" rx="2" fill="#a06a2e" />
          <path d="M5 1V51" stroke="#7b4d1c" strokeWidth="2" />
          <circle cx="26" cy="24" r="13" stroke="#93612a" strokeWidth="1.2" />
          <circle cx="26" cy="20" r="5" fill="#8f5e28" />
          <path d="M16 31Q26 23 36 31Q26 40 16 31Z" fill="#8f5e28" />
        </g>
      </Art>
    ),
  },
  {
    name: "Notes",
    art: (
      <Art>
        <g transform="rotate(-5 26 26)">
          <rect x="5" y="1" width="42" height="50" fill="#fbfaf5" />
          <rect x="5" y="1" width="42" height="11" fill="#f5c928" />
          <path d="M7 17H45M7 21H45M7 25H45M7 29H45M7 33H45M7 37H45M7 41H45M7 45H45" stroke="#d6d3ca" />
        </g>
      </Art>
    ),
  },
  {
    name: "Calendar",
    art: (
      <Art>
        <g transform="rotate(-4 26 26)">
          <path d="M4 46H50L51 51H3Z" fill="#4a4a4c" />
          <rect x="5" y="2" width="42" height="47" rx="1.5" fill="#fcfcfc" />
          <rect x="5" y="2" width="42" height="14" rx="1.5" fill="#dd3236" />
          <text x="26" y="13" textAnchor="middle" fontSize="10" fontFamily="Inter, sans-serif" fill="#fff">
            MAY
          </text>
          <text x="26" y="41" textAnchor="middle" fontSize="28" fontWeight="300" fontFamily="Inter, sans-serif" fill="#222">
            3
          </text>
        </g>
      </Art>
    ),
  },
  {
    name: "News",
    art: (
      <Art>
        <circle cx="26" cy="26" r="26" fill="#e3e6ea" />
        <circle cx="26" cy="25" r="25" fill="#f4f6f9" />
        <path d="M12 12H22L40 31V40H31L12 21Z M27 12H40V25Z M12 27L25 40H12Z" fill="#ee2a55" />
      </Art>
    ),
  },
  {
    name: "Photos",
    art: (
      <Art>
        <circle cx="26" cy="26" r="26" fill="#f4f4f2" />
        {petals.map((p, i) => (
          <rect key={p} x="19" y="4" width="14" height="21" rx="7" fill={p} opacity="0.9" transform={`rotate(${i * 45} 26 26)`} />
        ))}
      </Art>
    ),
  },
];

const running: DockApp[] = [
  {
    name: "Preview",
    open: true,
    art: (
      <Art>
        <Grad id="pv" a="#5d92e8" b="#d7e3f3" />
        <rect x="5" y="3" width="44" height="38" fill="#8c6a39" stroke="#f2f2f2" strokeWidth="1.5" />
        <g transform="rotate(-6 24 28)">
          <rect x="0" y="9" width="44" height="39" fill="#f6f6f6" />
          <rect x="2" y="11" width="40" height="16" fill="url(#pv)" />
          <rect x="2" y="27" width="40" height="8" fill="#20468f" />
          <path d="M2 35H42V46H2Z" fill="#a9b3b4" />
          <path d="M2 46L10 38L17 42L26 39L42 46Z" fill="#4e3c2a" />
        </g>
        <path d="M42 41L47 50" stroke="#7a746c" strokeWidth="6" strokeLinecap="round" />
        <circle cx="42" cy="32" r="9.5" fill="#b9bdc1" fillOpacity="0.75" stroke="#3e4144" strokeWidth="2.5" />
      </Art>
    ),
  },
  {
    name: "WhatsApp",
    open: true,
    art: (
      <Art>
        <path d="M26 0A26 26 0 1 1 14 49L0 52L4 39A26 26 0 0 1 26 0Z" fill="#f3f5f3" />
        <path d="M26 4A22 22 0 1 1 14.5 44.5L6 47L8.5 39A22 22 0 0 1 26 4Z" fill="#38c454" />
        <path d="M16 13L21 15L22 22L19 25C21 30 25 33 29 34L33 31L39 34L38 39C35 42 29 41 23 37C15 31 10 20 16 13Z" fill="#fff" />
      </Art>
    ),
  },
  {
    name: "Skitch",
    open: true,
    art: (
      <Art>
        <Grad id="sk" a="#b8217f" b="#d60d4c" />
        <ellipse cx="26" cy="25" rx="29" ry="28" fill="url(#sk)" />
        <path d="M5 12H27L46 24H20Z M20 26H46L27 38H5L13 30Z" fill="#fff" />
        <path d="M18 12L29 24M18 38L28 27" stroke="#d8c2d0" strokeWidth="1.2" />
      </Art>
    ),
  },
  {
    name: "PowerPoint",
    open: true,
    art: (
      <Art>
        <path d="M29 26V2A24 24 0 0 1 53 26Z" fill="#ff8469" />
        <path d="M29 26V2A24 24 0 0 0 5 26Z" fill="#ea5f45" />
        <path d="M5 26H53A24 24 0 0 1 5 26Z" fill="#cb4127" />
        <rect x="-1" y="12" width="28" height="28" rx="2" fill="#b7291d" />
        <text x="13" y="33" textAnchor="middle" fontSize="20" fontWeight="700" fontFamily="Inter, sans-serif" fill="#fff">
          P
        </text>
      </Art>
    ),
  },
];

const shelf: DockApp[] = [
  {
    name: "Downloads",
    art: (
      <Art>
        <rect x="3" y="5" width="46" height="36" rx="2" fill="#5cc4ef" />
        <path d="M5 1H46V5H5Z" fill="#232323" />
        <path d="M5 5H33V9H5Z" fill="#5a1430" />
        <path d="M6 8H30L45 21V54H6Z" fill="#fafafa" />
        <path d="M30 8L45 21L33 17Z" fill="#d7d7d7" />
        <path d="M11 22H24M11 26H18" stroke="#9b9b9b" />
        <path d="M11 29H15M28 34H32" stroke="#333" strokeWidth="3" />
        <text x="25" y="51" textAnchor="middle" fontSize="9" fontFamily="Inter, sans-serif" fill="#333">
          HTML
        </text>
      </Art>
    ),
  },
  {
    name: "Trash",
    art: (
      <Art>
        <Grad id="tr" a="#cfcfcf" b="#e4e4e4" />
        <path d="M5 4L12 0L17 3L23 -2L29 2L35 -1L41 1L47 5L44 12H8Z" fill="#e9e9e6" />
        <path d="M10 5L16 3L19 9ZM22 2L27 9L20 10ZM30 4L36 8L29 11ZM38 2L43 8L37 9Z" fill="#6d6c68" />
        <path d="M4 5C14 12 38 12 48 5L43 49Q26 56 9 49Z" fill="url(#tr)" opacity="0.92" />
        <path d="M4 5C14 12 38 12 48 5" stroke="#f5f5f5" strokeWidth="1.5" />
        <path d="M15 18L22 30L18 42M35 20L29 34" stroke="#bdbdbd" />
      </Art>
    ),
  },
];

function DockGroup({ items }: { items: DockApp[] }) {
  return (
    <>
      {items.map((a) => (
        <button key={a.name} aria-label={a.name} className="flex min-w-0 flex-1 flex-col items-center pt-[11px]">
          <span className="flex h-[52px] items-center">{a.art}</span>
          {a.open && <span className="mt-[7px] size-[7px] rounded-full bg-[#272727]" />}
        </button>
      ))}
    </>
  );
}

function Separator() {
  return (
    <span className="flex w-7 shrink-0 justify-center pt-[11px]">
      <span className="h-[59px] w-[2px] bg-[#5f5e5b]" />
    </span>
  );
}

function Dock() {
  return (
    <footer className="flex h-[81px] justify-center bg-linear-to-b from-[#0c0c0c] via-[#75746f] via-60% to-[#aaa89f]">
      <div className="relative z-10 flex w-[79%] items-stretch rounded-t-xl bg-linear-to-b from-[#8b8a86] to-[#a5a4a0] px-[6px] shadow-[0_-6px_34px_rgba(0,0,0,0.14)]">
        <DockGroup items={apps} />
        <Separator />
        <DockGroup items={running} />
        <Separator />
        <DockGroup items={shelf} />
      </div>
    </footer>
  );
}

export default function App() {
  return (
    <div className="flex min-h-screen flex-col bg-[#0b1417] font-['Inter',sans-serif]">
      <MenuBar />
      <div className="flex flex-1 flex-col bg-[#0c0c0c] pt-[2px]">
        <TabStrip />
        <AddressBar />
        <SiteHeader />
        <main className="flex flex-1 rounded-b-xl bg-[#f8f8f8] pb-[18px] pr-[47px] pt-[17px] font-['Open_Sans',sans-serif]">
          <ViewSwitcher />
          <section className="flex min-w-0 flex-1 flex-col">
            <AppToolbar />
            <div className="flex flex-1 rounded-b-md border-b-[3px] border-l-[3px] border-r-2 border-[#cbcbcb]">
              <TaskTable />
              <div className="w-1 border-l border-[#d0d0d0] bg-[#f4f4f4]" />
              <Gantt />
            </div>
          </section>
        </main>
      </div>
      <Dock />
    </div>
  );
}
